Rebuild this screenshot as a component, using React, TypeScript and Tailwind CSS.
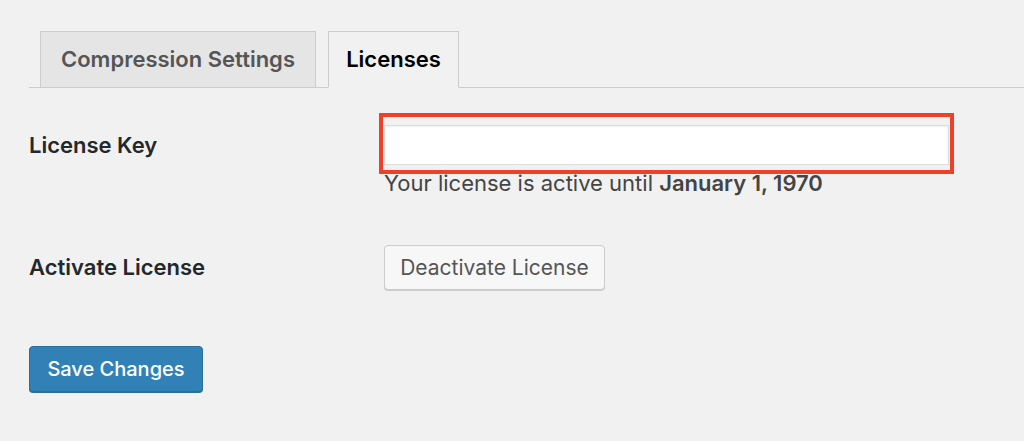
import React from 'react';

const font = { fontFamily: 'Inter, "Liberation Sans", sans-serif' };

export default function App() {
  return (
    <div className="min-h-[441px] w-full bg-[#f1f1f1] pt-[31px] pl-[29px]" style={font}>
      {/* tabs */}
      <div className="flex h-[57px] items-end gap-[12px] border-b border-[#cccccc] pl-[11px]">
        <div className="-mb-px flex h-[57px] w-[276px] items-center justify-center border border-[#cccccc] bg-[#e5e5e5] text-[22px] font-semibold text-[#555555]">
          Compression Settings
        </div>
        <div className="-mb-px flex h-[57px] w-[131px] items-center justify-center border border-b-[#f1f1f1] border-[#cccccc] bg-[#f1f1f1] text-[22px] font-semibold text-black">
          Licenses
        </div>
      </div>

      <div className="mt-[37px] grid grid-cols-[355px_1fr]">
        {/* license key */}
        <div className="text-[22px] leading-[40px] font-semibold text-[#23282d]">License Key</div>
        <div>
          <div className="relative w-[565px]">
            <input
              type="text"
              className="block h-[40px] w-full border border-[#dddddd] bg-white shadow-[inset_0_1px_2px_rgba(0,0,0,0.07)] outline-none"
            />
            <div className="pointer-events-none absolute -top-[12px] -right-[5px] -bottom-[9px] -left-[5px] border-[4px] border-[#ee4127]" />
          </div>
          <p className="mt-[5px] text-[22px] leading-[26px] text-[#444444]">
            Your license is active until <strong className="font-semibold">January 1, 1970</strong>
          </p>
        </div>

        {/* activate */}
        <div className="mt-[49px] flex h-[45px] items-center text-[22px] font-semibold text-[#23282d]">
          Activate License
        </div>
        <div className="mt-[49px]">
          <button className="h-[45px] w-[221px] rounded-[4px] border border-[#cccccc] bg-[#f7f7f7] text-[21px] text-[#555555] shadow-[0_1px_0_#cccccc]">
            Deactivate License
          </button>
        </div>
      </div>

      <button className="mt-[56px] h-[46px] w-[174px] rounded-[4px] border border-[#2a6e9c] bg-[#3181b7] text-[20px] font-medium text-white shadow-[0_1px_0_#2a6e9c]">
        Save Changes
      </button>
    </div>
  );
}
